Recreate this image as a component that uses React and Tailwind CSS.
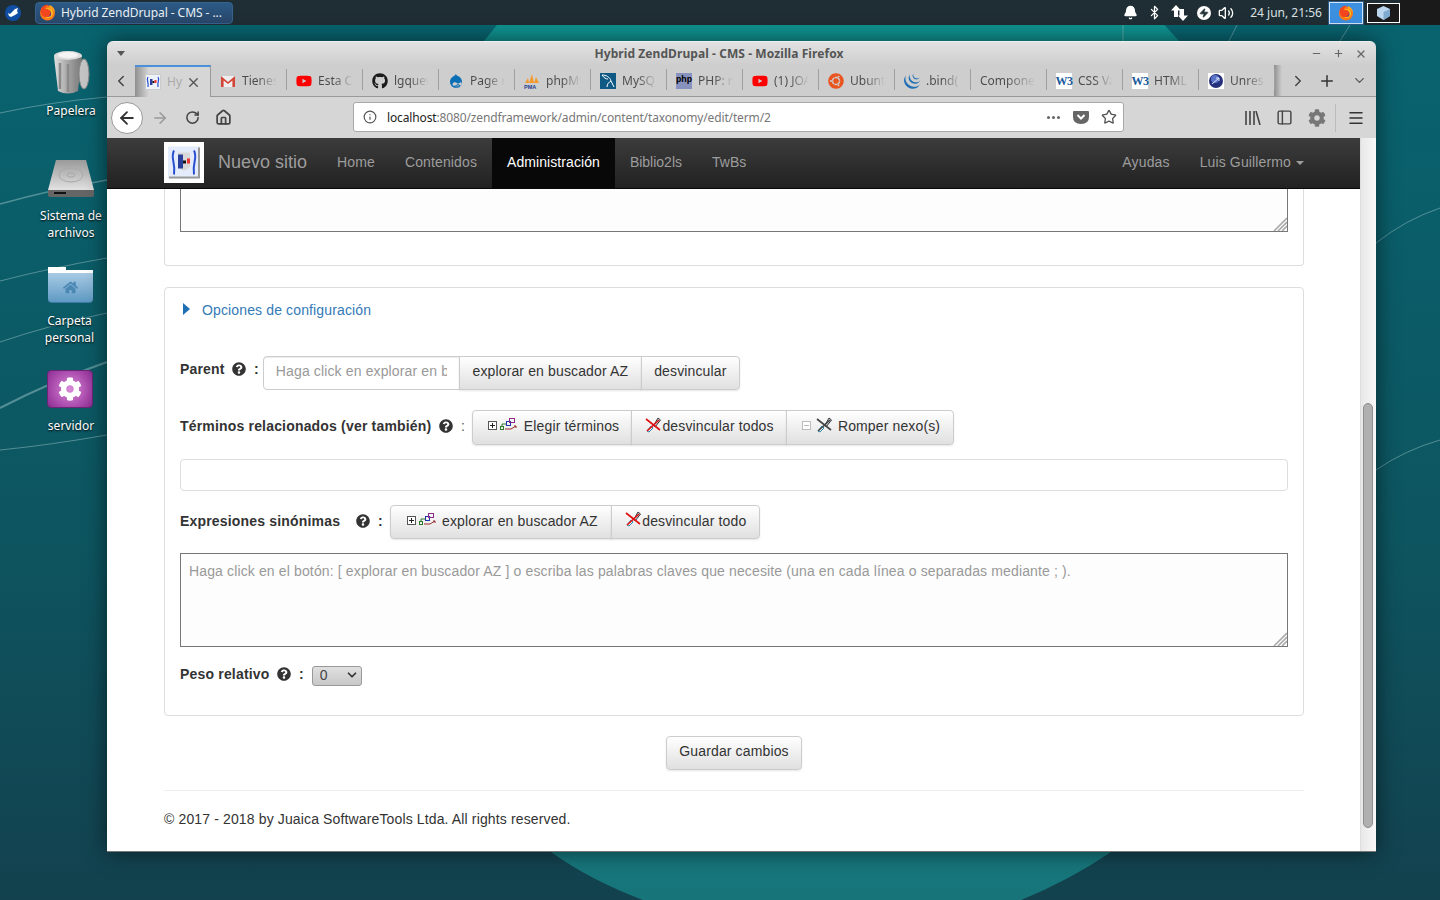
import { Bell, Bluetooth, Zap, Volume2, ChevronLeft, ChevronRight, ChevronDown, X, Plus, Minus, ArrowLeft, ArrowRight, RotateCw, Home, Info, Star, PanelLeft, Menu } from "lucide-react";
import { FaQuestionCircle, FaGithub, FaDrupal, FaYoutube, FaUbuntu, FaHome, FaCog } from "react-icons/fa";
import { SiJquery } from "react-icons/si";

const Firefox = ({ size = 16 }) => (
  <svg width={size} height={size} viewBox="0 0 16 16">
    <circle cx="8" cy="8.5" r="7" fill="#ff7a18" />
    <circle cx="8.5" cy="8.5" r="4.6" fill="#ffc21a" />
    <circle cx="8.5" cy="9" r="3" fill="#4a2fa8" />
    <path d="M2 4 C4 1 7 0 9 1 C7 2 6 3 6 5 C8 4 11 5 11 8 C11 11 8 13 5 12 C2 11 1 7 2 4Z" fill="#f2461f" />
    <path d="M10 1 C13 2 15 5 15 8 C14 6 12 4 10 4Z" fill="#ffa51f" />
  </svg>
);

const Gmail = () => (
  <svg width="16" height="16" viewBox="0 0 16 16">
    <path d="M1 3h14v11H1z" fill="#eee" />
    <path d="M1 14V3l7 6 7-6v11h-2.6V7.4L8 11 3.6 7.4V14z" fill="#d44638" />
  </svg>
);

const Pma = () => (
  <svg width="16" height="16" viewBox="0 0 16 16">
    <path d="M1 10 L4 5 L5 10Z M5 10 L8 1 L10 10Z M10 10 L12 4 L15 10Z" fill="#f29a2e" />
    <text x="0" y="15.5" fontSize="5.5" fontWeight="700" fill="#24408e" fontFamily="Liberation Sans, sans-serif">PMA</text>
  </svg>
);

const W3 = () => (
  <div className="w-4 h-4 bg-white flex items-center justify-center text-[12px] font-bold leading-none tracking-tighter text-[#1a5a9c] font-['Liberation_Serif',serif]">W3</div>
);

const PhpBox = () => (
  <div className="w-4 h-4 bg-[#8892bf] flex items-center justify-center text-[9px] font-bold leading-none text-black font-['Liberation_Mono',monospace]">php</div>
);

const MysqlBox = () => (
  <svg width="16" height="16" viewBox="0 0 16 16">
    <rect width="16" height="16" fill="#0f5a85" />
    <path d="M2 2 C6 2 10 4 11 8 C12 10 13 12 14 14 M11 8 C9 9 7 11 7 14 M2 2 C4 5 6 6 8 6" stroke="#fff" strokeWidth="1" fill="none" />
  </svg>
);

const Unres = () => (
  <svg width="16" height="16" viewBox="0 0 16 16">
    <rect width="16" height="16" fill="#fff" />
    <circle cx="8" cy="8" r="7" fill="#24307c" />
    <circle cx="7" cy="6" r="4" fill="#5a74c8" />
    <path d="M4 11 L11 5 M8 5h3v3" stroke="#dfe6ff" strokeWidth="1" fill="none" />
  </svg>
);

const FaviconHy = () => (
  <svg width="16" height="16" viewBox="0 0 16 16">
    <rect width="16" height="16" fill="#eef2fb" />
    <rect x="0.5" y="0.5" width="15" height="15" fill="none" stroke="#ccc" />
    <path d="M3 3 C1 6 4 8 3 13 M13 3 C15 6 12 8 13 13" stroke="#2a4fd0" strokeWidth="1.2" fill="none" />
    <rect x="5" y="5" width="2.5" height="6" fill="#2a3f9c" />
    <rect x="7.5" y="7" width="2" height="2" fill="#111" />
    <rect x="9.5" y="6" width="2" height="3" fill="#e33" />
  </svg>
);

const TreeIcon = () => (
  <svg width="30" height="14" viewBox="0 0 30 14" className="shrink-0 mb-[3px]">
    <rect x="0.5" y="3.5" width="8" height="8" fill="#fff" stroke="#555" />
    <path d="M2 7.5h5M4.5 5v5" stroke="#222" />
    <rect x="12.5" y="8.5" width="3" height="3" fill="none" stroke="#2c7a2c" />
    <path d="M14 8V6h4" stroke="#2c7a2c" fill="none" />
    <rect x="18.5" y="3.5" width="4" height="4" fill="none" stroke="#2233aa" />
    <rect x="21.5" y="0.5" width="5" height="4" fill="none" stroke="#8a2a8a" />
    <path d="M17 11h6l5-3" stroke="#9c2a2a" fill="none" />
    <path d="M26 8h2v2" stroke="#9c2a2a" fill="none" />
  </svg>
);

const UnlinkIcon = ({ color = "#e01010" }) => (
  <svg width="16" height="16" viewBox="0 0 16 16" className="shrink-0 mb-[4px]">
    <path d="M2 14 L6 9 L8 11 L4 15Z" fill="none" stroke="#2a8ab0" />
    <path d="M9 8 L13 1 L15.5 3 L10 10Z" fill="#cfe0f0" stroke="#333" />
    <path d="M1 2 L15 13 M14 3 L2 14" stroke={color} strokeWidth="1.6" />
  </svg>
);

const Help = () => <FaQuestionCircle className="text-[#333] text-[14px] shrink-0" />;

const Grip = () => (
  <svg width="14" height="14" viewBox="0 0 14 14" className="absolute right-px bottom-px pointer-events-none">
    <path d="M1 14 L14 1 M5 14 L14 5 M9 14 L14 9" stroke="#aaa" strokeWidth="1.6" />
  </svg>
);

const tabs = [
  [<Gmail />, "Tienes"],
  [<FaYoutube className="text-[#f00] text-[16px]" />, "Esta C"],
  [<FaGithub className="text-[#1b1b1b] text-[16px]" />, "lgquev"],
  [<FaDrupal className="text-[#0b6fb5] text-[16px]" />, "Page n"],
  [<Pma />, "phpMy"],
  [<MysqlBox />, "MySQ"],
  [<PhpBox />, "PHP: m"],
  [<FaYoutube className="text-[#f00] text-[16px]" />, "(1) JOA"],
  [<FaUbuntu className="text-[#e9541f] text-[16px]" />, "Ubunt"],
  [<SiJquery className="text-[#1f6fb5] text-[16px]" />, ".bind("],
  [null, "Componen"],
  [<W3 />, "CSS Va"],
  [<W3 />, "HTML"],
  [<Unres />, "Unres"],
];

const Tab = ({ icon, label }) => (
  <div className="w-[76px] h-full flex items-center pl-[9px] gap-[6px] shrink-0 relative">
    {icon && <div className="w-4 h-4 flex items-center justify-center shrink-0">{icon}</div>}
    <div className={`${icon ? "w-[35px]" : "w-[56px]"} overflow-hidden whitespace-nowrap text-[12px] bg-gradient-to-r from-[#4a4a4a] from-45% to-transparent to-100% bg-clip-text text-transparent`}>
      {label}
    </div>
    <div className="absolute right-[0px] top-[4px] bottom-[6px] w-px bg-[#a0a0a0]" />
  </div>
);

const Btn = ({ children, className = "" }) => (
  <div className={`h-full flex items-center justify-center pb-[2px] border border-[#ccc] -ml-px first:ml-0 bg-gradient-to-b from-white to-[#e0e0e0] text-[#333] text-[14px] whitespace-nowrap shadow-[0_1px_2px_rgba(0,0,0,0.1)] first:rounded-l last:rounded-r ${className}`}>
    {children}
  </div>
);

const DesktopIcon = ({ top, children, label, labelTop }) => (
  <>
    <div className="absolute left-[41px] w-[60px] flex justify-center" style={{ top }}>{children}</div>
    <div className="absolute left-[31px] w-[80px] text-center text-white text-[12px] leading-[17px] [text-shadow:0_1px_2px_#000]" style={{ top: labelTop }}>
      {label}
    </div>
  </>
);

export default function App() {
  return (
    <div className="relative w-[1440px] h-[900px] overflow-hidden font-['Noto_Sans',sans-serif] bg-[#0b5f69]">
      {/* wallpaper */}
      <svg className="absolute inset-0" width="1440" height="900" viewBox="0 0 1440 900">
        <defs>
          <linearGradient id="wall" x1="0" y1="0" x2="0" y2="1">
            <stop offset="0" stopColor="#086470" />
            <stop offset="0.6" stopColor="#0d5560" />
            <stop offset="1" stopColor="#13414e" />
          </linearGradient>
          <linearGradient id="swoop" x1="0" y1="0" x2="0" y2="1">
            <stop offset="0" stopColor="#0f9290" />
            <stop offset="1" stopColor="#17757a" />
          </linearGradient>
          <linearGradient id="disk" x1="0" y1="0" x2="0" y2="1">
            <stop offset="0" stopColor="#9a9a9a" />
            <stop offset="1" stopColor="#e2e2e2" />
          </linearGradient>
          <linearGradient id="bin" x1="0" y1="0" x2="1" y2="0">
            <stop offset="0" stopColor="#e0e0e0" />
            <stop offset="0.5" stopColor="#a4a4a4" />
            <stop offset="1" stopColor="#777" />
          </linearGradient>
        </defs>
        <rect width="1440" height="900" fill="url(#wall)" />
        <path d="M501 20 L484 41 L500 500 L551 852 Q590 880 643 900 L1021 900 Q1070 880 1111 852 L1300 500 L1179 41 L1160 20Z" fill="url(#swoop)" />
        <g stroke="#8fb9bd" fill="none" opacity="0.55">
          <path d="M0 113 Q50 102 107 97" strokeWidth="1" />
          <path d="M0 204 Q50 190 107 180" strokeWidth="1.5" />
          <path d="M0 281 Q50 268 107 258" strokeWidth="1" />
          <path d="M0 342 Q50 325 107 313" strokeWidth="1" />
          <path d="M0 408 Q50 382 107 362" strokeWidth="2" />
          <path d="M0 450 Q50 445 107 435" strokeWidth="1" />
          <path d="M1376 243 Q1405 220 1440 208" strokeWidth="1" />
          <path d="M1376 470 Q1405 450 1440 440" strokeWidth="1" />
          <path d="M1123 25 L1123 41" strokeWidth="1" />
          <path d="M1237 25 L1229 41" strokeWidth="1" />
          <path d="M1350 25 L1340 41" strokeWidth="1" />
        </g>
      </svg>

      {/* top panel */}
      <div className="relative h-[25px] bg-[#1f2e34] flex items-center text-[12px] text-[#dfe4e6]">
        <div className="ml-[5px] w-4 h-4 rounded-full bg-[#0f4ea3] flex items-center justify-center">
          <svg width="12" height="10" viewBox="0 0 12 10"><path d="M1 5 L3 6 L8 1 L11 0 L10 3 L11 5 L8 7 L4 9 L2 8Z" fill="#fff" /></svg>
        </div>
        <div className="ml-[14px] w-[198px] h-[22px] bg-gradient-to-b from-[#2b5a86] to-[#28466a] border border-[#36628c] rounded-sm flex items-center pl-[3px] gap-[5px] text-[#e8eef2] tracking-[-0.06px]">
          <Firefox size={17} />
          <span>Hybrid ZendDrupal - CMS - ...</span>
        </div>
        <div className="ml-auto flex items-center h-full">
          <Bell size={15} className="text-white fill-white" />
          <Bluetooth size={15} className="ml-[9px] text-white" />
          <svg width="17" height="16" viewBox="0 0 17 16" className="ml-[9px]">
            <path d="M5 0 L10 5.5 H7 V12 H3 V5.5 H0Z M12 16 L7 10.5 H8.5 V4 H13 V10.5 H17Z" fill="#fff" />
          </svg>
          <div className="ml-[9px] w-[14px] h-[14px] rounded-full bg-white flex items-center justify-center">
            <Zap size={10} className="text-[#1f2e34] fill-[#1f2e34]" />
          </div>
          <Volume2 size={16} className="ml-[7px] text-white" />
          <span className="ml-[16px] text-[12px] text-[#d9e0e3]">24 jun, 21:56</span>
          <div className="ml-[7px] w-[34px] h-[22px] bg-[#3d8fe0] border border-[#cfe4f8] outline outline-[#2b5a86] flex items-center justify-center">
            <Firefox size={16} />
          </div>
          <div className="ml-[4px] w-[33px] h-[20px] bg-[#1a1a1a] border border-white flex items-center justify-center">
            <svg width="13" height="14" viewBox="0 0 13 14"><path d="M6.5 0 L13 3 V10 L6.5 14 L0 10 V3Z" fill="#bcd6ee" /><path d="M6.5 6 L13 3 V10 L6.5 14Z" fill="#7fa9cf" /></svg>
          </div>
          <div className="w-[40px] h-full bg-[#1a1a1a]" />
        </div>
      </div>

      {/* desktop icons */}
      <DesktopIcon top={50} labelTop={102} label="Papelera">
        <svg width="40" height="46" viewBox="0 0 40 46">
          <ellipse cx="17" cy="6" rx="14" ry="5" fill="#ddd" />
          <path d="M3 7 L7 41 Q17 46 27 41 L31 7 Q17 13 3 7Z" fill="url(#bin)" />
          <path d="M9 13v26M17 14v28M25 13v26" stroke="#8a8a8a" strokeWidth="2.5" />
          <ellipse cx="33" cy="24" rx="5" ry="15" fill="#c4c4c4" stroke="#888" />
          <ellipse cx="17" cy="5" rx="10" ry="3" fill="#f4f4f4" />
        </svg>
      </DesktopIcon>
      <DesktopIcon top={160} labelTop={207} label={<>Sistema de<br />archivos</>}>
        <svg width="46" height="37" viewBox="0 0 46 37">
          <path d="M8 0 H38 L46 30 H0Z" fill="url(#disk)" />
          <ellipse cx="23" cy="15" rx="12" ry="7" fill="none" stroke="#a8a8a8" />
          <ellipse cx="23" cy="15" rx="4" ry="2" fill="none" stroke="#a8a8a8" />
          <path d="M0 30 H46 V35 Q46 37 44 37 H2 Q0 37 0 35Z" fill="#666" />
          <rect x="6" y="32" width="12" height="2" fill="#111" />
        </svg>
      </DesktopIcon>
      <DesktopIcon top={267} labelTop={312} label={<div className="pr-[3px]">Carpeta<br />personal</div>}>
        <div className="w-[45px] h-[36px] flex flex-col mr-[2px]">
          <div className="w-[18px] h-[3px] bg-white" />
          <div className="h-[3px] bg-white" />
          <div className="flex-1 bg-gradient-to-b from-[#a8cbe4] to-[#5f9ac4] rounded-b-sm flex items-center justify-center border-b border-[#3f7aa6]">
            <FaHome className="text-[#4a87b3] text-[15px]" />
          </div>
        </div>
      </DesktopIcon>
      <DesktopIcon top={370} labelTop={417} label="servidor">
        <div className="w-[46px] h-[38px] rounded-sm bg-[radial-gradient(circle,#d98bd9,#a545a8_70%,#8a2f92)] border border-[#6d2477] flex items-center justify-center mr-[2px]">
          <FaCog className="text-white text-[24px]" />
        </div>
      </DesktopIcon>

      {/* firefox window */}
      <div className="absolute left-[107px] top-[41px] w-[1269px] h-[811px] flex flex-col rounded-t-md overflow-hidden border-b border-[#777] shadow-[0_0_22px_rgba(0,0,0,0.55)]">
        {/* title bar */}
        <div className="h-[24px] shrink-0 bg-gradient-to-b from-[#e2e2e2] to-[#cecece] flex items-center relative border-t border-[#eee]">
          <div className="ml-[10px] w-0 h-0 border-l-[4px] border-r-[4px] border-t-[5px] border-l-transparent border-r-transparent border-t-[#555]" />
          <div className="flex-1 text-center text-[12px] font-bold text-[#555] pl-[2px] pt-[1px] tracking-[0.08px]">Hybrid ZendDrupal - CMS - Mozilla Firefox</div>
          <Minus size={11} strokeWidth={2.5} className="text-[#666] mr-[11px]" />
          <Plus size={11} strokeWidth={2.5} className="text-[#666] mr-[11px]" />
          <X size={12} strokeWidth={2.5} className="text-[#666] mr-[9px]" />
        </div>

        {/* tab strip */}
        <div className="h-[32px] shrink-0 bg-[#cecece] border-b border-[#999] flex items-stretch">
          <div className="w-[28px] flex items-center justify-center"><ChevronLeft size={18} className="text-[#444]" /></div>
          <div className="w-[76px] h-[32px] shrink-0 bg-[#d6d6d6] border-t-2 border-[#4a90d9] border-r border-r-[#999] flex items-center pl-[10px] relative">
            <div className="absolute left-0 top-0 bottom-0 w-[14px] bg-gradient-to-r from-[#8f8f8f] to-transparent" />
            <div className="relative"><FaviconHy /></div>
            <span className="ml-[6px] text-[12px] text-[#aaa]">Hy</span>
            <X size={15} strokeWidth={2.2} className="ml-auto mr-[9px] text-[#555]" />
          </div>
          <div className="flex h-full relative">
            {tabs.map(([icon, label], i) => <Tab key={i} icon={icon} label={label} />)}
          </div>
          <div className="w-[8px] bg-gradient-to-r from-[#8f8f8f] to-transparent -ml-[1px]" />
          <div className="flex items-center">
            <ChevronRight size={18} className="text-[#444] ml-[7px]" />
            <Plus size={18} strokeWidth={2} className="text-[#333] ml-[11px]" />
            <ChevronDown size={15} className="text-[#555] ml-[16px]" />
          </div>
        </div>

        {/* nav toolbar */}
        <div className="h-[41px] shrink-0 bg-[#d6d6d6] flex items-center relative">
          <div className="ml-[4px] w-[32px] h-[32px] rounded-full bg-white border border-[#999] flex items-center justify-center">
            <ArrowLeft size={20} strokeWidth={2.2} className="text-[#333]" />
          </div>
          <ArrowRight size={18} className="ml-[8px] text-[#999]" />
          <RotateCw size={15} strokeWidth={2.4} className="ml-[16px] text-[#444]" />
          <Home size={17} strokeWidth={2.4} className="ml-[15px] text-[#444]" />
          <div className="ml-[121px] mb-[1px] w-[771px] h-[30px] bg-white border border-[#a8a8a8] rounded-[3px] flex items-center text-[12px] tracking-[-0.14px]">
            <Info size={14} className="ml-[9px] text-[#555]" />
            <span className="ml-[10px] text-[#222] pt-px">localhost</span>
            <span className="text-[#777] pt-px">:8080/zendframework/admin/content/taxonomy/edit/term/2</span>
            <div className="ml-auto flex gap-[2px] mr-[1px]">
              <i className="w-[3px] h-[3px] rounded-full bg-[#666]" />
              <i className="w-[3px] h-[3px] rounded-full bg-[#666]" />
              <i className="w-[3px] h-[3px] rounded-full bg-[#666]" />
            </div>
            <svg width="16" height="15" viewBox="0 0 16 15" className="ml-[12px]">
              <path d="M1 1 H15 Q16 1 16 2 V7 Q16 14 8 14 Q0 14 0 7 V2 Q0 1 1 1Z" fill="#666" />
              <path d="M4.5 5 L8 8.5 L11.5 5" stroke="#fff" strokeWidth="2" fill="none" />
            </svg>
            <Star size={16} strokeWidth={2} className="ml-[12px] mr-[6px] text-[#555]" />
          </div>
          <svg width="16" height="14" viewBox="0 0 16 14" className="ml-[121px]">
            <path d="M1 0v14M5 0v14M9 0v14M11 0l4 14" stroke="#444" strokeWidth="1.6" fill="none" />
          </svg>
          <PanelLeft size={17} strokeWidth={2} className="ml-[15px] text-[#444]" />
          <FaCog className="ml-[15px] text-[#777] text-[18px]" />
          <div className="ml-[9px] w-px h-[28px] bg-[#bbb]" />
          <Menu size={18} strokeWidth={2} className="ml-[11px] text-[#333]" />
        </div>

        {/* browser content */}
        <div className="flex-1 flex min-h-0 font-['Liberation_Sans',sans-serif] text-[14px] text-[#333] tracking-[0.135px]">
          <div className="w-[1253px] bg-white flex flex-col">
            {/* site navbar */}
            <div className="h-[51px] shrink-0 bg-gradient-to-b from-[#3c3c3c] to-[#222] border-b border-[#080808] flex text-[#9d9d9d]">
              <div className="ml-[57px] w-[40px] h-[41px] mt-[4px] bg-white p-[3px] flex items-center justify-center">
                <svg width="32" height="33" viewBox="0 0 16 16">
                  <rect width="16" height="16" fill="#e4ecfb" />
                  <path d="M3 2 C1 6 4 8 3 14 M13 2 C15 6 12 8 13 14" stroke="#2a4fd0" strokeWidth="1" fill="none" />
                  <path d="M5 3 H11 V10 Q8 14 5 10Z" fill="#d8d8d8" />
                  <rect x="5" y="4" width="2.5" height="7" fill="#2a3f9c" />
                  <rect x="7.5" y="7" width="1.5" height="1.5" fill="#111" />
                  <rect x="9.5" y="6" width="1.5" height="2.5" fill="#e33" />
                  <path d="M0.5 15.5 H15.5 V0.5" fill="none" stroke="#999" />
                </svg>
              </div>
              <div className="ml-[14px] text-[18px] leading-[48px] w-[104px] tracking-normal">Nuevo sitio</div>
              <div className="px-[15px] leading-[48px]">Home</div>
              <div className="px-[15px] leading-[48px]">Contenidos</div>
              <div className="px-[15px] leading-[48px] bg-[#080808] text-white tracking-[0.07px]">Administración</div>
              <div className="px-[15px] leading-[48px] tracking-normal">Biblio2ls</div>
              <div className="px-[15px] leading-[48px] tracking-normal">TwBs</div>
              <div className="ml-auto flex mr-[41px]">
                <div className="px-[15px] leading-[48px]">Ayudas</div>
                <div className="px-[15px] leading-[48px] flex items-center pb-[2px]">
                  Luis Guillermo
                  <span className="ml-[5px] mt-[1px] w-0 h-0 border-l-[4px] border-r-[4px] border-t-[4px] border-l-transparent border-r-transparent border-t-[#9d9d9d]" />
                </div>
              </div>
            </div>

            {/* page */}
            <div className="ml-[57px] w-[1140px] flex flex-col">
              <div className="h-[77px] shrink-0 border border-t-0 border-[#ddd] rounded-b px-[15px]">
                <div className="relative h-[43px]">
                  <textarea className="block w-full h-full resize-none border border-t-0 border-[#777] bg-[#fdfdfd] outline-none" />
                  <Grip />
                </div>
              </div>

              <div className="mt-[21px] h-[429px] shrink-0 border border-[#ddd] rounded px-[15px] flex flex-col">
                <div className="mt-[12px] h-[20px] flex items-center text-[#337ab7]">
                  <span className="mt-[-2px] ml-[3px] w-0 h-0 border-t-[6px] border-b-[6px] border-l-[7px] border-t-transparent border-b-transparent border-l-[#1f6fb5]" />
                  <span className="ml-[12px]">Opciones de configuración</span>
                </div>

                <div className="mt-[36px] h-[34px] flex items-center">
                  <b className="mt-[-8px] w-[44px] tracking-[0.18px]">Parent</b>
                  <div className="mt-[-9px] ml-[8px]"><Help /></div>
                  <b className="mt-[-8px] ml-[8px]">:</b>
                  <div className="ml-[4px] flex h-[34px]">
                    <input readOnly placeholder="Haga click en explorar en buscador AZ" className="w-[197px] h-full px-[12px] pb-[4px] border border-[#ccc] rounded-l bg-white placeholder:text-[#999] outline-none text-[14px] shadow-[inset_0_1px_1px_rgba(0,0,0,0.075)]" />
                    <Btn className="w-[183px] -ml-px pb-[4px]!">explorar en buscador AZ</Btn>
                    <Btn className="w-[99px] pb-[4px]!">desvincular</Btn>
                  </div>
                </div>

                <div className="mt-[20px] h-[35px] flex items-center">
                  <b className="whitespace-nowrap w-[251px] mb-[2px] tracking-[0.18px]">Términos relacionados (ver también)</b>
                  <div className="ml-[8px] mb-[3px]"><Help /></div>
                  <span className="ml-[8px] mb-[2px] text-[#555]">:</span>
                  <div className="ml-[7px] flex h-[35px]">
                    <Btn className="w-[160px] pl-[3px]"><TreeIcon /><span className="ml-[6px]">Elegir términos</span></Btn>
                    <Btn className="w-[156px] pl-[1px]"><UnlinkIcon /><span className="ml-[1px]">desvincular todos</span></Btn>
                    <Btn className="w-[168px] pl-[2px]">
                      <svg width="9" height="9" viewBox="0 0 9 9" className="mr-[5px] mb-[3px]"><rect x="0.5" y="0.5" width="8" height="8" fill="#fff" stroke="#bbb" /><path d="M2 4.5h5" stroke="#bbb" /></svg>
                      <UnlinkIcon color="#444" />
                      <span className="ml-[6px]">Romper nexo(s)</span>
                    </Btn>
                  </div>
                </div>

                <div className="mt-[14px] h-[32px] shrink-0 border border-[#ddd] rounded bg-white" />

                <div className="mt-[14px] h-[34px] flex items-center">
                  <b className="whitespace-nowrap w-[160px] mb-[2px] tracking-[0.18px]">Expresiones sinónimas</b>
                  <div className="ml-[16px] mb-[3px]"><Help /></div>
                  <b className="ml-[8px] mb-[2px]">:</b>
                  <div className="ml-[7px] flex h-[34px]">
                    <Btn className="w-[222px] pl-[3px]"><TreeIcon /><span className="ml-[5px]">explorar en buscador AZ</span></Btn>
                    <Btn className="w-[149px] pl-[1px]"><UnlinkIcon /><span className="ml-[1px]">desvincular todo</span></Btn>
                  </div>
                </div>

                <div className="relative mt-[14px] h-[94px] shrink-0">
                  <textarea
                    readOnly
                    placeholder="Haga click en el botón: [ explorar en buscador AZ ] o escriba las palabras claves que necesite (una en cada línea o separadas mediante ; )."
                    className="block w-full h-full resize-none border border-[#777] bg-[#fdfdfd] px-[8px] py-[7px] placeholder:text-[#999] outline-none leading-[20px]"
                  />
                  <Grip />
                </div>

                <div className="mt-[18px] h-[20px] flex items-center">
                  <b className="whitespace-nowrap w-[89px] mb-[2px] tracking-[0.18px]">Peso relativo</b>
                  <div className="ml-[8px] mb-[3px]"><Help /></div>
                  <b className="ml-[8px] mb-[2px]">:</b>
                  <div className="ml-[8px] w-[50px] h-[20px] relative">
                    <select defaultValue="0" className="appearance-none w-full h-full pl-[7px] pb-[2px] border border-[#999] rounded-[3px] bg-gradient-to-b from-[#e0e0e0] to-[#c8c8c8] text-[#444] text-[14px] leading-none outline-none">
                      <option value="0">0</option>
                    </select>
                    <ChevronDown size={14} strokeWidth={3} className="absolute right-[3px] top-[3px] text-[#333] pointer-events-none" />
                  </div>
                </div>
              </div>

              <div className="mt-[20px] flex justify-center">
                <div className="w-[136px] h-[34px] flex">
                  <Btn className="w-full rounded pb-[4px]!">Guardar cambios</Btn>
                </div>
              </div>

              <div className="mt-[20px] h-px bg-[#eee]" />
              <div className="mt-[18px] leading-[20px]">© 2017 - 2018 by Juaica SoftwareTools Ltda. All rights reserved.</div>
            </div>
          </div>

          {/* scrollbar */}
          <div className="w-[16px] bg-gradient-to-r from-[#e8e8e8] to-[#f8f8f8] border-l border-[#ddd] pt-[265px] pl-[2px]">
            <div className="w-[10px] h-[425px] rounded-full bg-[#b0b0b0] border border-[#8f8f8f]" />
          </div>
        </div>
      </div>
    </div>
  );
}
